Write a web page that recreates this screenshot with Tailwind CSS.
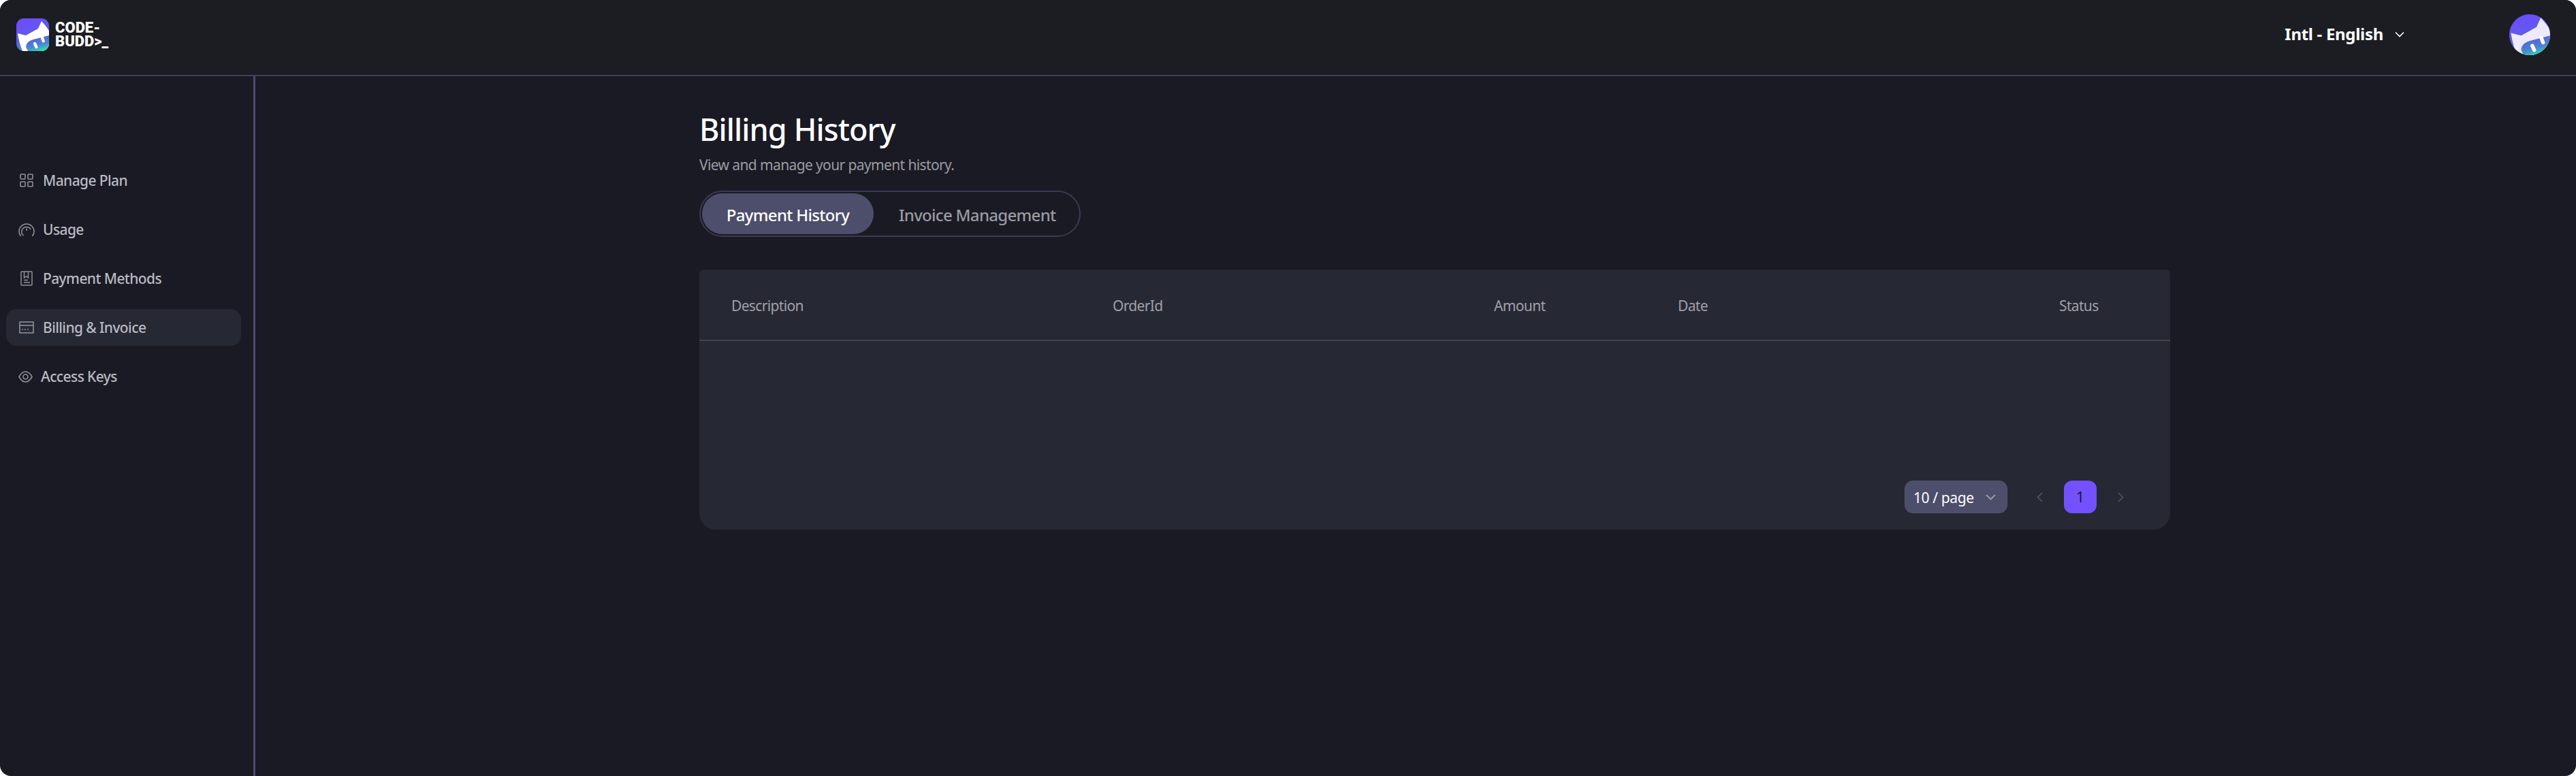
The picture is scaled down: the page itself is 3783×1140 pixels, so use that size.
<!DOCTYPE html>
<html lang="en">
<head>
  <meta charset="UTF-8" />
  <title>Billing History - CodeBuddy</title>
  <script src="https://cdn.jsdelivr.net/npm/@tailwindcss/browser@4"></script>
</head>
<body class="bg-white font-['Noto_Sans',sans-serif] overflow-hidden">
  <div class="h-[1140px] w-[3783px] flex flex-col bg-[#1a1a24] rounded-[16px] overflow-hidden">
    <!-- header -->
    <header class="h-[112px] shrink-0 flex items-center bg-[#1c1d22] border-b-2 border-[#3f4058] pl-[24px] pr-[38px]">
      <svg class="w-[48px] h-[48px] mb-[8px]" viewBox="0 0 48 48">
        <defs>
          <linearGradient id="logoBg" gradientUnits="userSpaceOnUse" x1="14" y1="8" x2="26" y2="50">
            <stop offset="0" stop-color="#6a4ffa" />
            <stop offset="0.55" stop-color="#5b62e0" />
            <stop offset="0.8" stop-color="#4a85cf" />
            <stop offset="1" stop-color="#2fd6b4" />
          </linearGradient>
          <clipPath id="logoClip"><rect width="48" height="48" rx="11" /></clipPath>
        </defs>
        <g clip-path="url(#logoClip)">
          <rect width="48" height="48" fill="url(#logoBg)" />
          <path d="M2 22 L14 25 L32 15 L37 4 L43 11 L48 18 V48 H9 Q4 36 2 22 Z" fill="#ffffff" />
          <path d="M48 25 L25 31 Q14 34 14 42 L17 48 H48 Z" fill="url(#logoBg)" />
          <rect x="26" y="34.5" width="4.4" height="10" rx="2.2" fill="#ffffff" transform="rotate(-25 28.2 39.5)" />
          <rect x="36.5" y="25.5" width="4.4" height="10" rx="2.2" fill="#ffffff" transform="rotate(-20 38.7 30.5)" />
        </g>
      </svg>
      <div class="ml-[9px] mb-[8px] font-['Roboto',sans-serif] font-black text-white text-[22px] leading-[20px]">
        <div>CODE-</div>
        <div>BUDD&gt;_</div>
      </div>
      <div class="ml-auto flex items-center mb-[10px]">
        <span class="text-white font-bold text-[24px] leading-[32px] tracking-[-0.3px]">Intl - English</span>
        <svg class="ml-[17px] w-[14px] h-[9px]" viewBox="0 0 14 9" fill="none" stroke="#ffffff" stroke-width="1.6"><path d="M1 1.5 L7 7.5 L13 1.5" /></svg>
      </div>
      <svg class="ml-[154px] mb-[8px] w-[60px] h-[60px]" viewBox="0 0 48 48">
        <defs><clipPath id="avatarClip"><circle cx="24" cy="24" r="24" /></clipPath></defs>
        <g clip-path="url(#avatarClip)">
          <rect width="48" height="48" fill="url(#logoBg)" />
          <path d="M2 22 L14 25 L32 15 L37 4 L43 11 L48 18 V48 H9 Q4 36 2 22 Z" fill="#eceafc" />
          <path d="M48 25 L25 31 Q14 34 14 42 L17 48 H48 Z" fill="url(#logoBg)" />
          <rect x="26" y="34.5" width="4.4" height="10" rx="2.2" fill="#ffffff" transform="rotate(-25 28.2 39.5)" />
          <rect x="36.5" y="25.5" width="4.4" height="10" rx="2.2" fill="#ffffff" transform="rotate(-20 38.7 30.5)" />
        </g>
      </svg>
    </header>

    <div class="flex flex-1 min-h-0">
      <!-- sidebar -->
      <aside class="w-[375px] shrink-0 border-r-[3px] border-[#4b4c6d] pt-[126px] pl-[9px] pr-[18px] flex flex-col gap-[18px] text-[21px] font-medium tracking-[-0.6px] text-[#b9bac3]">
        <a class="h-[54px] flex items-center pl-[20px] rounded-[15px]">
          <svg class="w-[20px] h-[20px] mr-[14px]" viewBox="0 0 20 20" fill="none" stroke="#8f9099" stroke-width="1.6">
            <rect x="1" y="1" width="7" height="7" rx="1" /><rect x="12" y="1" width="7" height="7" rx="1" />
            <rect x="1" y="12" width="7" height="7" rx="1" /><rect x="12" y="12" width="7" height="7" rx="1" />
          </svg>
          <span class="pt-[2px]">Manage Plan</span>
        </a>
        <a class="h-[54px] flex items-center pl-[18px] rounded-[15px]">
          <svg class="w-[24px] h-[22px] mr-[12px]" viewBox="0 0 24 22" fill="none" stroke="#8f9099" stroke-width="1.6">
            <path d="M3.5 21 A11 11 0 1 1 20.5 21" /><path d="M7.5 20 A7 7 0 0 1 12 7.5 A7 7 0 0 1 18 11" /><path d="M12 9.5 V13" />
          </svg>
          <span class="pt-[2px]">Usage</span>
        </a>
        <a class="h-[54px] flex items-center pl-[21px] rounded-[15px]">
          <svg class="w-[18px] h-[22px] mr-[15px]" viewBox="0 0 18 22" fill="none" stroke="#8f9099" stroke-width="1.5">
            <rect x="1" y="1" width="16" height="20" rx="1" /><path d="M5.5 1 V10 L8.5 8 L11.5 10 V1" /><path d="M5 13.5 H11 M5 17 H14" />
          </svg>
          <span class="pt-[2px]">Payment Methods</span>
        </a>
        <a class="h-[54px] flex items-center pl-[19px] rounded-[15px] bg-[#262834]">
          <svg class="w-[22px] h-[18px] mr-[13px]" viewBox="0 0 22 18" fill="none" stroke="#8f9099" stroke-width="1.6">
            <rect x="1" y="1" width="20" height="16" /><path d="M1 6 H21" /><path d="M4 12 H6 M8 12 H10 M12 12 H14" />
          </svg>
          <span class="pt-[2px]">Billing &amp; Invoice</span>
        </a>
        <a class="h-[54px] flex items-center pl-[18px] rounded-[15px]">
          <svg class="w-[21px] h-[17px] mr-[12px]" viewBox="0 0 21 17" fill="none" stroke="#8f9099" stroke-width="1.6">
            <path d="M1 8.5 C4 3 7 1 10.5 1 C14 1 17 3 20 8.5 C17 14 14 16 10.5 16 C7 16 4 14 1 8.5 Z" /><circle cx="10.5" cy="8.5" r="3.5" />
          </svg>
          <span class="pt-[2px]">Access Keys</span>
        </a>
      </aside>

      <!-- main -->
      <main class="flex-1 pl-[652px] pt-[48px]">
        <div class="w-[2160px]">
          <h1 class="text-[45px] leading-[60px] font-medium tracking-[-0.9px] text-white">Billing History</h1>
          <p class="mt-[7px] text-[21px] leading-[30px] tracking-[-0.62px] text-[#9b9ca3]">View and manage your payment history.</p>
          <div class="mt-[23px] w-[560px] h-[68px] rounded-full border-2 border-[#3a3b52] flex items-center pl-[2px] text-[24px] font-medium tracking-[-0.7px]">
            <div class="w-[252px] h-[60px] pt-[3px] rounded-full bg-[#4d4e6b] text-white flex items-center justify-center">Payment History</div>
            <div class="ml-[37px] pt-[3px] text-[#9a9aa0]">Invoice Management</div>
          </div>
          <section class="mt-[48px] h-[382px] bg-[#262834] rounded-t-[6px] rounded-b-[24px] flex flex-col">
            <div class="h-[105px] shrink-0 pt-[5px] border-b-2 border-[#43444d] grid grid-cols-[560px_560px_270px_560px_1fr] pl-[47px] items-center text-[21px] tracking-[-0.65px] text-[#a0a1a7]">
              <div>Description</div>
              <div>OrderId</div>
              <div>Amount</div>
              <div>Date</div>
              <div>Status</div>
            </div>
            <div class="mt-auto mb-[24px] flex items-center justify-end pr-[68px]">
              <div class="w-[151px] h-[48px] pt-[3px] rounded-[12px] bg-[#4d4e6b] border border-[#55566b] flex items-center pl-[12px] text-[21px] tracking-[-0.4px] text-white">
                10 / page
                <svg class="ml-[17px] mb-[3px] w-[15px] h-[9px]" viewBox="0 0 15 9" fill="none" stroke="#9a9aa8" stroke-width="1.8"><path d="M1 1 L7.5 7.5 L14 1" /></svg>
              </div>
              <svg class="ml-[43px] w-[9px] h-[15px]" viewBox="0 0 9 15" fill="none" stroke="#4c4d68" stroke-width="1.8"><path d="M8 1 L1.5 7.5 L8 14" /></svg>
              <div class="ml-[31px] w-[48px] h-[48px] pt-[2px] rounded-[12px] bg-[#7351ff] flex items-center justify-center text-[21px] text-[#1a1a24]">1</div>
              <svg class="ml-[31px] w-[9px] h-[15px]" viewBox="0 0 9 15" fill="none" stroke="#4c4d68" stroke-width="1.8"><path d="M1 1 L7.5 7.5 L1 14" /></svg>
            </div>
          </section>
        </div>
      </main>
    </div>
  </div>
</body>
</html>
